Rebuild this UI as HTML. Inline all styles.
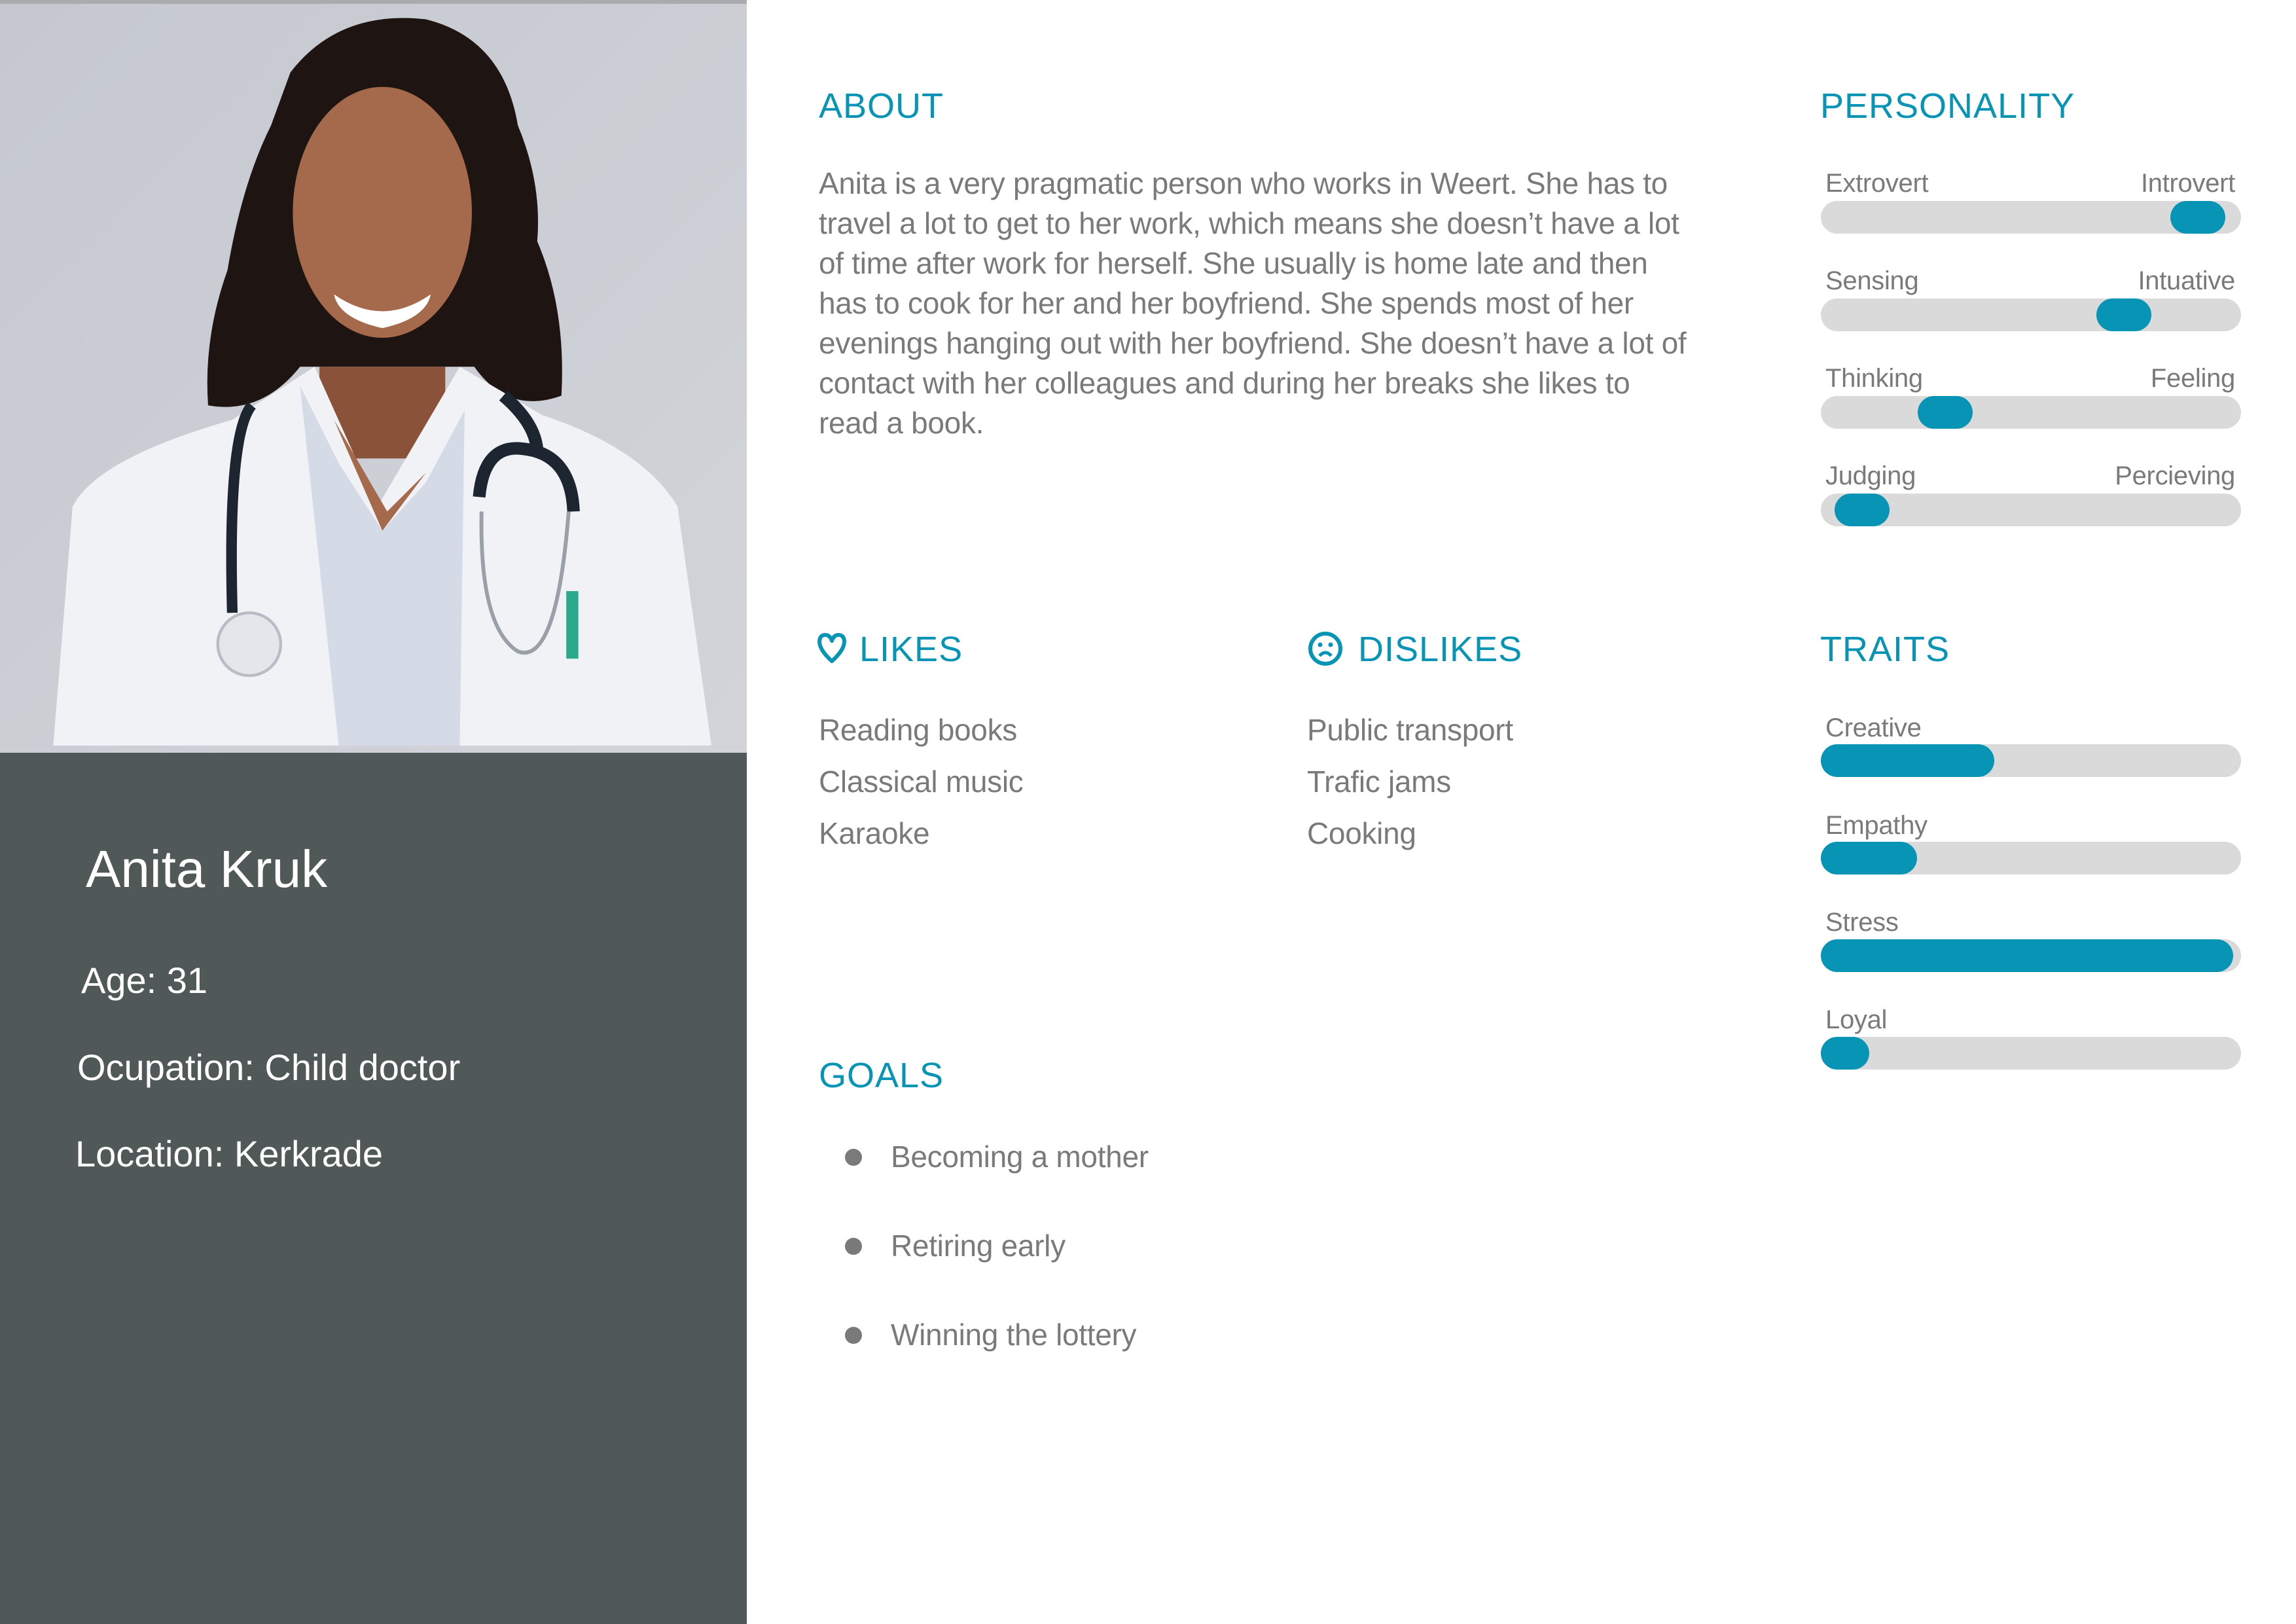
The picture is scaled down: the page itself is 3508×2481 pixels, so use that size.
<!DOCTYPE html>
<html><head><meta charset="utf-8"><style>
*{margin:0;padding:0;box-sizing:border-box}
body{width:3508px;height:2481px;background:#fff;position:relative;overflow:hidden;font-family:"Liberation Sans",sans-serif}
.abs{position:absolute;white-space:nowrap}
.h{color:#0894b4;font-size:54px;letter-spacing:1px;line-height:1}
.t{color:#7a7a7a;font-size:46px;line-height:61px;letter-spacing:-0.3px}
.lbl{color:#7a7a7a;font-size:40px;line-height:1;letter-spacing:-0.3px}
.bar{position:absolute;left:2782px;width:642px;height:50px;border-radius:25px;background:#dadada}
.knob{position:absolute;top:0;width:84px;height:50px;border-radius:25px;background:#0894b4}
.fill{position:absolute;left:0;top:0;height:50px;border-radius:25px;background:#0894b4}
.w{color:#fff;line-height:1}
.dot{position:absolute;width:26px;height:26px;border-radius:50%;background:#7a7a7a}
</style></head><body>
<div class="abs" style="left:0;top:0;width:1141px;height:1150px;overflow:hidden">
<svg width="1141" height="1150" viewBox="0 0 1543 1560" preserveAspectRatio="none">
<defs><linearGradient id="bg" x1="0" y1="0" x2="1" y2="1"><stop offset="0" stop-color="#c5c8d0"/><stop offset="1" stop-color="#d2d4d9"/></linearGradient></defs>
<rect width="1543" height="1560" fill="url(#bg)"/>
<rect width="1543" height="8" fill="#a9abae"/>
<path d="M600 150 Q700 20 880 40 Q1040 80 1070 260 Q1120 380 1110 500 Q1170 640 1160 820 Q1050 860 980 760 L620 760 Q540 860 430 840 Q420 700 470 560 Q500 380 560 260 Z" fill="#1e1512"/>
<path d="M660 760 L660 950 L920 950 L920 760 Z" fill="#8a5238"/>
<ellipse cx="790" cy="440" rx="185" ry="260" fill="#a5694b"/>
<path d="M690 610 Q790 680 890 610 Q880 660 790 680 Q700 660 690 610Z" fill="#fff"/>
<path d="M110 1545 L150 1050 Q200 950 480 870 L650 760 L780 1050 L950 760 L1120 860 Q1330 930 1400 1050 L1470 1545 Z" fill="#f1f2f6"/>
<path d="M620 800 L700 1545 L950 1545 L960 850 L880 1000 L790 1100 L700 960 Z" fill="#d5dbe6"/>
<path d="M690 870 L790 1100 L880 980 L800 1060 Z" fill="#a5694b"/>
<path d="M520 840 Q470 900 480 1270" stroke="#1c2530" stroke-width="22" fill="none"/>
<circle cx="515" cy="1335" r="65" fill="#e4e6ec" stroke="#b8bcc4" stroke-width="6"/>
<path d="M1040 820 Q1110 880 1110 940 M990 1030 Q1000 920 1080 930 Q1180 940 1185 1060" stroke="#1c2530" stroke-width="26" fill="none"/>
<path d="M995 1060 Q990 1300 1070 1350 Q1150 1380 1175 1060" stroke="#9aa0a8" stroke-width="8" fill="none"/>
<rect x="1170" y="1225" width="25" height="140" fill="#2aa98c"/>
</svg></div>
<div class="abs" style="left:0;top:1150px;width:1141px;height:1331px;background:#505957"></div>
<div class="abs w" style="left:131px;top:1288px;font-size:80px">Anita Kruk</div>
<div class="abs w" style="left:124px;top:1470px;font-size:56px">Age: 31</div>
<div class="abs w" style="left:118px;top:1603px;font-size:56px">Ocupation: Child doctor</div>
<div class="abs w" style="left:115px;top:1735px;font-size:56px">Location: Kerkrade</div>

<div class="abs h" style="left:1251px;top:135px">ABOUT</div>
<div class="abs t" style="left:1251px;top:250px">Anita is a very pragmatic person who works in Weert. She has to<br>travel a lot to get to her work, which means she doesn’t have a lot<br>of time after work for herself. She usually is home late and then<br>has to cook for her and her boyfriend. She spends most of her<br>evenings hanging out with her boyfriend. She doesn’t have a lot of<br>contact with her colleagues and during her breaks she likes to<br>read a book.</div>

<div class="abs h" style="left:2781px;top:135px">PERSONALITY</div>
<div class="abs lbl" style="left:2789px;top:260px">Extrovert</div><div class="abs lbl" style="right:93px;top:260px">Introvert</div>
<div class="bar" style="top:307px"><div class="knob" style="left:534px"></div></div>
<div class="abs lbl" style="left:2789px;top:409px">Sensing</div><div class="abs lbl" style="right:93px;top:409px">Intuative</div>
<div class="bar" style="top:456px"><div class="knob" style="left:421px"></div></div>
<div class="abs lbl" style="left:2789px;top:558px">Thinking</div><div class="abs lbl" style="right:93px;top:558px">Feeling</div>
<div class="bar" style="top:605px"><div class="knob" style="left:148px"></div></div>
<div class="abs lbl" style="left:2789px;top:707px">Judging</div><div class="abs lbl" style="right:93px;top:707px">Percieving</div>
<div class="bar" style="top:754px"><div class="knob" style="left:21px"></div></div>

<svg class="abs" style="left:1247px;top:966px" width="48" height="50" viewBox="0 0 48 50"><path d="M24 44 Q6 28 5 15 Q5 4 14 4 Q21 4 24 13 Q27 4 34 4 Q43 4 43 15 Q42 28 24 44Z" fill="none" stroke="#0894b4" stroke-width="6" stroke-linejoin="round"/></svg>
<div class="abs h" style="left:1313px;top:965px">LIKES</div>
<svg class="abs" style="left:1997px;top:962px" width="56" height="58" viewBox="0 0 56 58"><circle cx="28" cy="29" r="23" fill="none" stroke="#0894b4" stroke-width="6"/><circle cx="20" cy="23" r="3.5" fill="#0894b4"/><circle cx="36" cy="23" r="3.5" fill="#0894b4"/><path d="M19 40 Q28 30 37 40" fill="none" stroke="#0894b4" stroke-width="5"/></svg>
<div class="abs h" style="left:2075px;top:965px">DISLIKES</div>
<div class="abs t" style="left:1251px;top:1076px;line-height:79px">Reading books<br>Classical music<br>Karaoke</div>
<div class="abs t" style="left:1997px;top:1076px;line-height:79px">Public transport<br>Trafic jams<br>Cooking</div>

<div class="abs h" style="left:2781px;top:965px">TRAITS</div>
<div class="abs lbl" style="left:2789px;top:1092px">Creative</div>
<div class="bar" style="top:1137px"><div class="fill" style="width:265px"></div></div>
<div class="abs lbl" style="left:2789px;top:1241px">Empathy</div>
<div class="bar" style="top:1286px"><div class="fill" style="width:147px"></div></div>
<div class="abs lbl" style="left:2789px;top:1389px">Stress</div>
<div class="bar" style="top:1435px"><div class="fill" style="width:630px"></div></div>
<div class="abs lbl" style="left:2789px;top:1538px">Loyal</div>
<div class="bar" style="top:1584px"><div class="fill" style="width:74px"></div></div>

<div class="abs h" style="left:1251px;top:1616px">GOALS</div>
<div class="dot" style="left:1291px;top:1755px"></div>
<div class="dot" style="left:1291px;top:1891px"></div>
<div class="dot" style="left:1291px;top:2027px"></div>
<div class="abs t" style="left:1361px;top:1737px">Becoming a mother</div>
<div class="abs t" style="left:1361px;top:1873px">Retiring early</div>
<div class="abs t" style="left:1361px;top:2009px">Winning the lottery</div>
</body></html>
